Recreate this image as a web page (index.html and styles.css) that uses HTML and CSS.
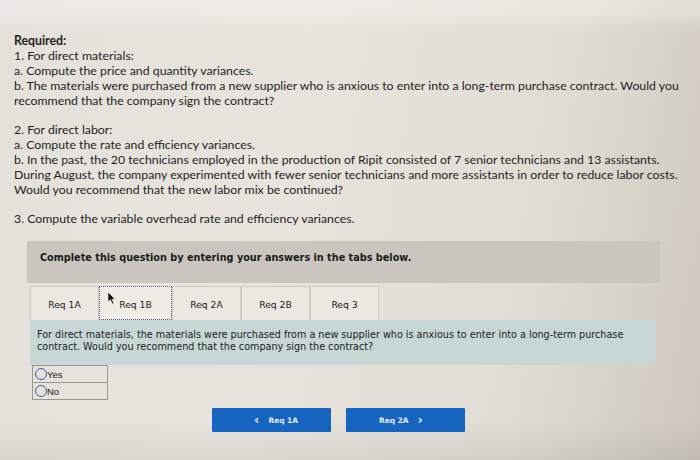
FILE: index.html
```html
<!DOCTYPE html>
<html>
<head>
<meta charset="utf-8">
<link rel="stylesheet" href="styles.css">
</head>
<body>
<div class="page">
  <div class="required">
    <p class="req-title">Required:</p>
    <p>1. For direct materials:</p>
    <p>a. Compute the price and quantity variances.</p>
    <p>b. The materials were purchased from a new supplier who is anxious to enter into a long-term purchase contract. Would you<br>recommend that the company sign the contract?</p>
    <p class="gap">2. For direct labor:</p>
    <p>a. Compute the rate and efficiency variances.</p>
    <p>b. In the past, the 20 technicians employed in the production of Ripit consisted of 7 senior technicians and 13 assistants.<br>During August, the company experimented with fewer senior technicians and more assistants in order to reduce labor costs.<br>Would you recommend that the new labor mix be continued?</p>
    <p class="gap">3. Compute the variable overhead rate and efficiency variances.</p>
  </div>

  <div class="instruction">Complete this question by entering your answers in the tabs below.</div>

  <div class="tabs">
    <div class="tab">Req 1A</div>
    <div class="tab active">Req 1B
      <svg class="cursor" width="9" height="13" viewBox="0 0 9 13"><path d="M1 0 L1 10 L3.4 7.8 L5.2 12 L6.8 11.3 L5 7.2 L8.2 7.2 Z" fill="#111" stroke="#fff" stroke-width="0.6"/></svg>
    </div>
    <div class="tab">Req 2A</div>
    <div class="tab">Req 2B</div>
    <div class="tab">Req 3</div>
  </div>

  <div class="panel">For direct materials, the materials were purchased from a new supplier who is anxious to enter into a long-term purchase<br>contract. Would you recommend that the company sign the contract?</div>

  <div class="options">
    <label class="opt"><span class="radio"></span>Yes</label>
    <label class="opt"><span class="radio"></span>No</label>
  </div>

  <div class="nav">
    <button class="btn"><span class="chev">&lsaquo;</span>Req 1A</button>
    <button class="btn">Req 2A<span class="chev">&rsaquo;</span></button>
  </div>
</div>
</body>
</html>
```

FILE: styles.css
```css
html, body {
  margin: 0;
  padding: 0;
}
body {
  width: 700px;
  height: 460px;
  overflow: hidden;
  background: linear-gradient(100deg, #e4e1db 0%, #e8e4dd 40%, #e1dcd3 75%, #cdc7bd 100%);
}
.page {
  padding: 33px 0 0 14px;
  box-sizing: border-box;
  height: 460px;
  background: linear-gradient(180deg, rgba(255,255,255,0.3) 0px, rgba(255,255,255,0.3) 12px, rgba(255,255,255,0) 30px, rgba(0,0,0,0) 420px, rgba(0,0,0,0.06) 460px);
}
.required {
  font-family: "Lato", "Open Sans", sans-serif;
  font-size: 12.3px;
  line-height: 15px;
  color: #1f1f1f;
  white-space: nowrap;
}
.required p {
  margin: 0;
}
.required .req-title {
  font-weight: bold;
}
.required .gap {
  margin-top: 14px;
}
.instruction {
  margin: 15px 0 0 13px;
  width: 633px;
  height: 42px;
  box-sizing: border-box;
  padding: 11px 0 0 13px;
  background: #cac6bf;
  font-family: "DejaVu Sans", Verdana, sans-serif;
  font-weight: bold;
  font-size: 9.7px;
  color: #1a1a1a;
}
.tabs {
  display: flex;
  margin: 3px 0 0 16px;
  height: 34px;
}
.tab {
  position: relative;
  width: 69px;
  box-sizing: border-box;
  border: 1px solid #cfcbc4;
  border-bottom: none;
  background: #ebe7e1;
  font-family: "DejaVu Sans", Verdana, sans-serif;
  font-size: 9.2px;
  color: #222;
  display: flex;
  align-items: center;
  justify-content: center;
  padding-top: 2px;
}
.tab.active {
  width: 73px;
  border: 1px dotted #4a5a80;
  background: #efebe5;
}
.cursor {
  position: absolute;
  left: 7px;
  top: 5px;
}
.panel {
  margin-left: 16px;
  width: 625px;
  height: 45px;
  box-sizing: border-box;
  padding: 9px 0 0 7px;
  background: #c7d7d6;
  font-family: "DejaVu Sans", Verdana, sans-serif;
  font-size: 9.65px;
  line-height: 12px;
  color: #1c1c1c;
  white-space: nowrap;
}
.options {
  margin: 0 0 0 18px;
  width: 74px;
  border: 1px solid #9c968c;
  display: flex;
  flex-direction: column;
}
.opt {
  display: flex;
  align-items: center;
  height: 16px;
  font-family: "Liberation Sans", Arial, sans-serif;
  font-size: 9.5px;
  color: #222;
}
.opt + .opt {
  border-top: 1px solid #9c968c;
}
.radio {
  width: 12px;
  height: 12px;
  border: 1.8px solid #3b5ea8;
  border-radius: 50%;
  margin: 0 0 0 2px;
  box-sizing: border-box;
}
.nav {
  display: flex;
  gap: 15px;
  margin: 8px 0 0 198px;
}
.btn {
  width: 119px;
  height: 24px;
  border: none;
  border-radius: 1px;
  background: #1565c0;
  color: #e8eef8;
  font-family: "DejaVu Sans", Verdana, sans-serif;
  font-weight: bold;
  font-size: 7.4px;
  display: flex;
  align-items: center;
  justify-content: center;
  padding: 0;
}
.chev {
  font-size: 13px;
  font-weight: bold;
  margin: 0 9px;
  line-height: 1;
  position: relative;
  top: -1px;
}
```
